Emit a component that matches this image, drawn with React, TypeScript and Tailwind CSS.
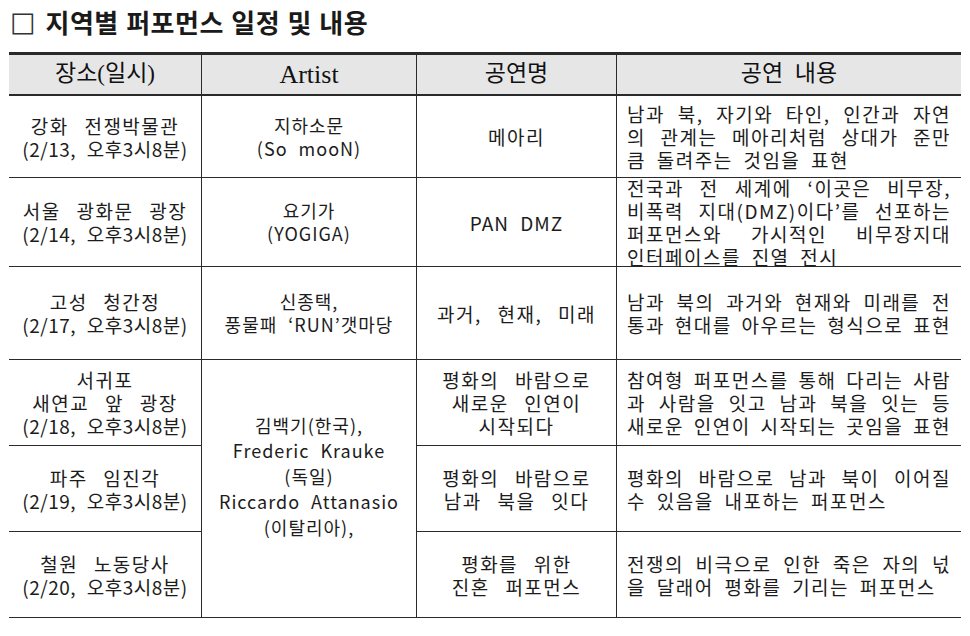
import React from "react";

type Line = { t: string; j?: boolean };

const body = "font-['Noto_Sans_CJK_KR',sans-serif]";

const hasHangul = (s: string) => /[\uac00-\ud7a3]/.test(s);
const hasDigit = (s: string) => /\d/.test(s);

function lineStyle(s: string) {
  if (hasDigit(s)) return "tracking-[0.5px] [word-spacing:6px]";
  if (hasHangul(s)) return "tracking-[1.5px] [word-spacing:10px]";
  return "tracking-[1px] [word-spacing:6px]";
}

function Center({ lines, cls = "", artist = false }: { lines: string[]; cls?: string; artist?: boolean }) {
  return (
    <div
      className={`flex flex-col items-center justify-center text-center border-r border-b border-[#2a2a2a] leading-[23px] text-[#1c1c1c] ${
        artist ? "text-[18px] tracking-[1px] [word-spacing:6px]" : "text-[19px]"
      } ${cls}`}
    >
      {lines.map((l, i) => (
        <div key={i} className={`whitespace-nowrap ${artist ? "" : lineStyle(l)}`}>
          {l}
        </div>
      ))}
    </div>
  );
}

function Content({ lines }: { lines: Line[] }) {
  return (
    <div className="flex flex-col justify-center border-b border-[#2a2a2a] pl-[10px] pr-[10px] text-[19px] leading-[23px] tracking-[1.5px] text-[#1c1c1c]">
      {lines.map((l, i) => (
        <div
          key={i}
          className={
            l.j
              ? "text-justify [text-align-last:justify] whitespace-nowrap [word-spacing:2px]"
              : "text-left whitespace-nowrap [word-spacing:5px]"
          }
        >
          {l.t}
        </div>
      ))}
    </div>
  );
}

const head =
  "flex items-center justify-center bg-[#e6e6e6] border-b-2 border-[#2a2a2a] text-[#111] font-['Liberation_Serif','Noto_Sans_CJK_KR',serif]";

export default function App() {
  return (
    <div className={`w-[970px] h-[636px] bg-white ${body} text-[#1c1c1c]`}>
      <div className="flex items-center pt-[6px] h-[38px] mb-[14px] pl-[10px]">
        <span className="text-[27px] leading-[32px] font-normal text-[#333] font-['DejaVu_Sans',sans-serif]">□</span>
        <span className="ml-[10px] text-[26px] leading-[32px] font-bold tracking-[0.5px] [word-spacing:1px] text-[#1a1a1a]">
          지역별 퍼포먼스 일정 및 내용
        </span>
      </div>
      <div className="ml-[9px] w-[952px] grid grid-cols-[193px_215px_200px_344px] grid-rows-[41px_82px_89px_93px_86px_86px_86px] border-t-[3px] border-[#2a2a2a]">
        {/* header */}
        <div className={`${head} border-r text-[23px]`}>장소(일시)</div>
        <div className={`${head} border-r text-[26px]`}>Artist</div>
        <div className={`${head} border-r text-[23px]`}>공연명</div>
        <div className={`${head} text-[23px] [word-spacing:6px]`}>공연 내용</div>

        {/* row 1 */}
        <Center lines={["강화 전쟁박물관", "(2/13, 오후3시8분)"]} />
        <Center artist lines={["지하소문", "(So mooN)"]} />
        <Center lines={["메아리"]} />
        <Content
          lines={[
            { t: "남과 북, 자기와 타인, 인간과 자연", j: true },
            { t: "의 관계는 메아리처럼 상대가 준만", j: true },
            { t: "큼 돌려주는 것임을 표현" },
          ]}
        />

        {/* row 2 */}
        <Center lines={["서울 광화문 광장", "(2/14, 오후3시8분)"]} />
        <Center artist lines={["요기가", "(YOGIGA)"]} />
        <Center lines={["PAN DMZ"]} />
        <Content
          lines={[
            { t: "전국과 전 세계에 ‘이곳은 비무장,", j: true },
            { t: "비폭력 지대(DMZ)이다’를 선포하는", j: true },
            { t: "퍼포먼스와 가시적인 비무장지대", j: true },
            { t: "인터페이스를 진열 전시" },
          ]}
        />

        {/* row 3 */}
        <Center lines={["고성 청간정", "(2/17, 오후3시8분)"]} />
        <Center artist lines={["신종택,", "풍물패 ‘RUN’갯마당"]} />
        <Center lines={["과거, 현재, 미래"]} />
        <Content
          lines={[
            { t: "남과 북의 과거와 현재와 미래를 전", j: true },
            { t: "통과 현대를 아우르는 형식으로 표현", j: true },
          ]}
        />

        {/* row 4 */}
        <Center lines={["서귀포", "새연교 앞 광장", "(2/18, 오후3시8분)"]} />
        <Center
          artist
          cls="row-span-3 leading-[25.5px] pb-[24px]"
          lines={["김백기(한국),", "Frederic Krauke", "(독일)", "Riccardo Attanasio", "(이탈리아),"]}
        />
        <Center lines={["평화의 바람으로", "새로운 인연이", "시작되다"]} />
        <Content
          lines={[
            { t: "참여형 퍼포먼스를 통해 다리는 사람", j: true },
            { t: "과 사람을 잇고 남과 북을 잇는 등", j: true },
            { t: "새로운 인연이 시작되는 곳임을 표현", j: true },
          ]}
        />

        {/* row 5 */}
        <Center lines={["파주 임진각", "(2/19, 오후3시8분)"]} />
        <Center lines={["평화의 바람으로", "남과 북을 잇다"]} />
        <Content
          lines={[
            { t: "평화의 바람으로 남과 북이 이어질", j: true },
            { t: "수 있음을 내포하는 퍼포먼스" },
          ]}
        />

        {/* row 6 */}
        <Center lines={["철원 노동당사", "(2/20, 오후3시8분)"]} />
        <Center lines={["평화를 위한", "진혼 퍼포먼스"]} />
        <Content
          lines={[
            { t: "전쟁의 비극으로 인한 죽은 자의 넋", j: true },
            { t: "을 달래어 평화를 기리는 퍼포먼스" },
          ]}
        />
      </div>
    </div>
  );
}
